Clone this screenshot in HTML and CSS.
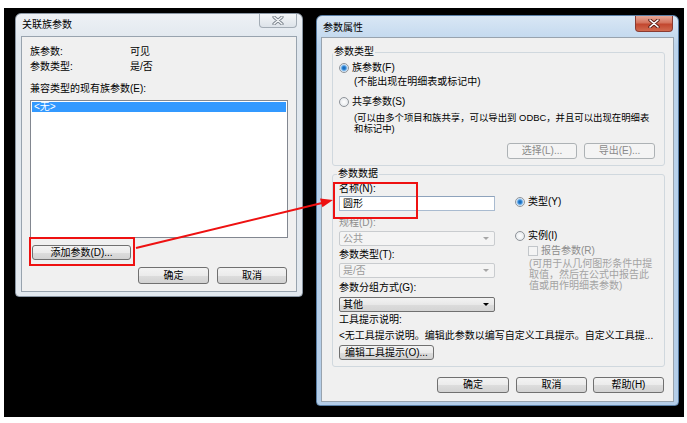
FILE: index.html
```html
<!DOCTYPE html>
<html>
<head>
  <meta charset="utf-8">
  <link rel="stylesheet" href="styles.css">
</head>
<body>
<div class="screen">

  <div class="window inactive assoc">
    <div class="titlebar">
      <span class="title">关联族参数</span>
      <span class="close-btn">
        <svg width="12" height="9" viewBox="0 0 12 9"><path d="M2 1 L10 8 M10 1 L2 8" stroke="#7a838c" stroke-width="3.2" stroke-linecap="round"/><path d="M2 1 L10 8 M10 1 L2 8" stroke="#f4f6f8" stroke-width="1.4" stroke-linecap="round"/></svg>
      </span>
    </div>
    <div class="panel">
      <div class="info-row"><span class="info-label">族参数:</span><span>可见</span></div>
      <div class="info-row"><span class="info-label">参数类型:</span><span>是/否</span></div>
      <div class="list-caption">兼容类型的现有族参数(E):</div>
      <div class="listbox">
        <div class="list-item selected">&lt;无&gt;</div>
      </div>
      <button class="btn add-btn">添加参数(D)...</button>
      <div class="dialog-buttons">
        <button class="btn ok-left">确定</button>
        <button class="btn cancel-left">取消</button>
      </div>
    </div>
  </div>

  <div class="window active props">
    <div class="titlebar">
      <span class="title">参数属性</span>
      <span class="close-btn red">
        <svg width="12" height="9" viewBox="0 0 12 9"><path d="M2 1 L10 8 M10 1 L2 8" stroke="#5a1f18" stroke-width="3.4" stroke-linecap="round"/><path d="M2 1 L10 8 M10 1 L2 8" stroke="#ffffff" stroke-width="1.6" stroke-linecap="round"/></svg>
      </span>
    </div>
    <div class="panel">
      <fieldset class="group type-group">
        <legend>参数类型</legend>
        <div class="radio-row"><span class="radio checked"></span>族参数(F)</div>
        <div class="note">(不能出现在明细表或标记中)</div>
        <div class="radio-row gap-8"><span class="radio"></span>共享参数(S)</div>
        <div class="note multi">(可以由多个项目和族共享，可以导出到 ODBC，并且可以出现在明细表<br>和标记中)</div>
        <div class="group-buttons">
          <button class="btn" disabled>选择(L)...</button>
          <button class="btn export" disabled>导出(E)...</button>
        </div>
      </fieldset>

      <fieldset class="group data-group">
        <legend>参数数据</legend>
        <div class="data-top">
          <div class="data-left">
            <div class="field-label first">名称(N):</div>
            <div class="textbox">圆形</div>
            <div class="field-label disabled-text m6">规程(D):</div>
            <div class="combo disabled m2">公共<span class="arrow"></span></div>
            <div class="field-label m3">参数类型(T):</div>
            <div class="combo disabled m2">是/否<span class="arrow"></span></div>
            <div class="field-label m4">参数分组方式(G):</div>
            <div class="combo m3">其他<span class="arrow"></span></div>
          </div>
          <div class="data-right">
            <div class="radio-row type-radio"><span class="radio checked"></span>类型(Y)</div>
            <div class="radio-row inst-radio"><span class="radio"></span>实例(I)</div>
            <div class="check-row"><span class="checkbox"></span>报告参数(R)</div>
            <div class="hint">(可用于从几何图形条件中提<br>取值，然后在公式中报告此<br>值或用作明细表参数)</div>
          </div>
        </div>
        <div class="field-label m2">工具提示说明:</div>
        <div class="tooltip-text">&lt;无工具提示说明。编辑此参数以编写自定义工具提示。自定义工具提...</div>
        <button class="btn tip-btn">编辑工具提示(O)...</button>
      </fieldset>

      <div class="dialog-buttons bottom">
        <button class="btn w72">确定</button>
        <button class="btn w71">取消</button>
        <button class="btn w71">帮助(H)</button>
      </div>
    </div>
  </div>

</div>

<svg class="annotations" width="687" height="423" viewBox="0 0 687 423">
  <rect x="30" y="238" width="104" height="27" fill="none" stroke="#ee1111" stroke-width="2"/>
  <rect x="334" y="183" width="83" height="35" fill="none" stroke="#ee1111" stroke-width="2"/>
  <line x1="136" y1="248" x2="322" y2="203" stroke="#ee1111" stroke-width="2"/>
  <polygon points="333,200 320,198.6 322.4,207.2" fill="#ee1111"/>
</svg>
</body>
</html>
```

FILE: styles.css
```css
html, body {
  margin: 0;
  padding: 0;
}
body {
  width: 687px;
  height: 423px;
  background: #ffffff;
  position: relative;
  overflow: hidden;
  font-family: "Liberation Sans", "Noto Sans CJK SC", sans-serif;
  font-size: 10px;
  color: #000;
}
.screen {
  margin: 8px 3px 0 4px;
  height: 409px;
  background: #000;
  display: flex;
  align-items: flex-start;
}

/* windows */
.window {
  box-sizing: border-box;
  display: flex;
  flex-direction: column;
  border: 1px solid #5c6f86;
  border-radius: 6px 6px 4px 4px;
}
.window.inactive {
  background: linear-gradient(#eef1f5, #dfe6ed 30px, #e3e9ef);
  border-color: #8a96a3;
}
.window.active {
  background: linear-gradient(#d9e7f5, #bcd4ec 30px, #b4cde8);
  border-color: #5a7fa6;
}
.assoc {
  width: 288px;
  height: 284px;
  margin: 5px 0 0 11px;
  padding: 0 5px 4px 5px;
}
.props {
  width: 363px;
  height: 391px;
  margin: 7px 0 0 13px;
  padding: 0 4px 3px 4px;
}
.titlebar {
  display: flex;
  justify-content: space-between;
  align-items: flex-start;
}
.assoc .titlebar {
  height: 22px;
}
.props .titlebar {
  height: 21px;
}
.title {
  line-height: 12px;
  padding-left: 1px;
  margin-top: 5px;
}
.props .title {
  margin-top: 6px;
  padding-left: 2px;
}
.close-btn {
  width: 38px;
  height: 14px;
  box-sizing: border-box;
  border: 1px solid #a3acb5;
  border-top: none;
  border-radius: 0 0 4px 4px;
  background: linear-gradient(#f4f6f8, #dde3e9);
  display: flex;
  align-items: center;
  justify-content: center;
}
.close-btn.red {
  width: 38px;
  height: 16px;
  margin-right: 1px;
  border: 1px solid #8a3b31;
  border-top: none;
  background: linear-gradient(#e9a897, #d4735d 45%, #c2472f 55%, #d16a4f);
}
.panel {
  flex: 1;
  background: #f0f0f0;
  border: 1px solid #98a3ae;
  display: flex;
  flex-direction: column;
}

/* left dialog */
.assoc .panel {
  padding: 7px 9px 0 8px;
}
.info-row {
  display: flex;
  line-height: 15px;
}
.info-label {
  width: 100px;
}
.list-caption {
  margin-top: 7px;
  line-height: 15px;
}
.listbox {
  box-sizing: border-box;
  width: 258px;
  height: 138px;
  margin-top: 4px;
  background: #fff;
  border: 1px solid #828790;
}
.list-item {
  margin: 1px;
  height: 10px;
  line-height: 10px;
  padding-left: 2px;
}
.list-item.selected {
  background: #3399ff;
  color: #fff;
}

/* buttons */
.btn {
  box-sizing: border-box;
  height: 16px;
  padding: 0;
  border: 1px solid #707070;
  border-radius: 3px;
  background: linear-gradient(#f3f3f3, #ebebeb 50%, #dddddd 51%, #d2d2d2);
  font-family: "Liberation Sans", "Noto Sans CJK SC", sans-serif;
  font-size: 10px;
  line-height: 12px;
  color: #000;
}
.btn:disabled {
  border-color: #adb2b5;
  background: #f4f4f4;
  color: #8a8a8a;
}
.add-btn {
  width: 99px;
  height: 15px;
  margin: 7px 0 0 2px;
}
.dialog-buttons {
  display: flex;
  justify-content: flex-end;
  gap: 8px;
  margin-top: 7px;
}
.ok-left {
  width: 71px;
  height: 17px;
}
.cancel-left {
  width: 70px;
  height: 17px;
}

/* right dialog */
.group {
  min-width: 0;
  border: 1px solid #d0d8de;
  border-radius: 3px;
  margin: 0 8px 0 10px;
  padding: 4px 9px 6px 6px;
}
.group legend {
  padding: 0 1px;
  line-height: 12px;
}
.type-group {
  margin-top: 8px;
}
.type-group legend {
  margin-left: -6px;
}
.data-group {
  margin-top: 2px;
  padding-top: 0;
}
.data-group legend {
  margin-left: -2px;
}
.radio-row {
  display: flex;
  align-items: center;
  gap: 3px;
  line-height: 12px;
  height: 12px;
}
.gap-8 {
  margin-top: 8px;
}
.radio {
  box-sizing: border-box;
  width: 10px;
  height: 10px;
  border-radius: 50%;
  border: 1px solid #8e9399;
  background: radial-gradient(circle, #ffffff, #dfe3e7);
}
.radio.checked {
  background: radial-gradient(circle, #0f5cab 0, #2f86d6 1.8px, #9fc9ef 3px, #eef3f8 4px);
}
.note {
  margin-top: 2px;
  padding-left: 15px;
  line-height: 12px;
  white-space: nowrap;
}
.note.multi {
  margin-top: 4px;
  font-size: 9.4px;
  line-height: 11px;
}
.group-buttons {
  display: flex;
  justify-content: flex-end;
  gap: 7px;
  margin-top: 9px;
}
.group-buttons .btn {
  width: 70px;
}
.group-buttons .export {
  width: 71px;
}

.data-top {
  display: flex;
}
.data-left {
  width: 156px;
  display: flex;
  flex-direction: column;
}
.field-label {
  line-height: 12px;
}
.field-label.first {
  margin-top: 3px;
}
.disabled-text {
  color: #8d8d8d;
}
.m2 { margin-top: 2px; }
.m3 { margin-top: 3px; }
.m4 { margin-top: 4px; }
.m6 { margin-top: 6px; }
.textbox {
  box-sizing: border-box;
  height: 15px;
  margin-top: 1px;
  padding-left: 3px;
  line-height: 13px;
  background: #fff;
  border: 1px solid #a9bbd0;
  border-top-color: #8ea3bc;
}
.combo {
  position: relative;
  box-sizing: border-box;
  height: 15px;
  padding-left: 3px;
  line-height: 13px;
  border: 1px solid #707070;
  border-radius: 2px;
  background: linear-gradient(#f3f3f3, #e8e8e8 50%, #dcdcdc 51%, #d4d4d4);
}
.combo.disabled {
  border-color: #c9cccf;
  background: #f4f4f4;
  color: #9a9a9a;
}
.arrow {
  position: absolute;
  right: 5px;
  top: 5px;
  width: 0;
  height: 0;
  border-left: 3px solid transparent;
  border-right: 3px solid transparent;
  border-top: 3px solid #000;
}
.combo.disabled .arrow {
  border-top-color: #a6a6a6;
}
.data-right {
  margin-left: 20px;
  display: flex;
  flex-direction: column;
}
.type-radio {
  margin-top: 16px;
}
.inst-radio {
  margin-top: 22px;
}
.check-row {
  display: flex;
  align-items: center;
  gap: 3px;
  margin-top: 3px;
  padding-left: 13px;
  line-height: 12px;
  color: #8d8d8d;
}
.checkbox {
  box-sizing: border-box;
  width: 10px;
  height: 10px;
  border: 1px solid #c2c6ca;
  background: #f4f4f4;
}
.hint {
  margin-top: 1px;
  padding-left: 14px;
  line-height: 11px;
  color: #a3a3a3;
  white-space: nowrap;
}
.tooltip-text {
  margin-top: 4px;
  line-height: 12px;
  white-space: nowrap;
}
.tip-btn {
  align-self: flex-start;
  width: 95px;
  height: 15px;
  margin-top: 3px;
}
.dialog-buttons.bottom {
  margin-top: 10px;
  padding-right: 9px;
  gap: 6px;
}
.w72 {
  width: 72px;
  margin-right: 1px;
}
.w71 {
  width: 71px;
}

/* red annotation overlay */
.annotations {
  position: absolute;
  top: 0;
  left: 0;
  pointer-events: none;
}
```
